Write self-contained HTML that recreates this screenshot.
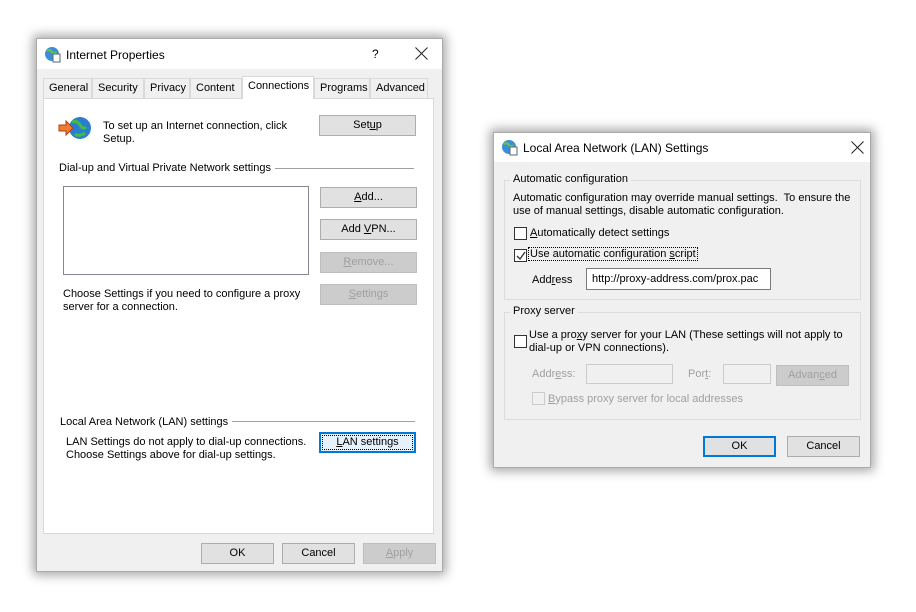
<!DOCTYPE html>
<html><head><style>
*{margin:0;padding:0;box-sizing:border-box}
body{width:916px;height:612px;background:#fff;position:relative;overflow:hidden;font-family:"Liberation Sans",sans-serif;font-size:11px;color:#000;white-space:nowrap}
.a{position:absolute}
.win{position:absolute;background:#f0f0f0;border:1px solid #aaa;box-shadow:0 0 10px 3px rgba(0,0,0,.35)}
.title{position:absolute;left:0;top:0;right:0;height:30px;background:#fff;font-size:12px}
.btn{position:absolute;background:#e1e1e1;border:1px solid #adadad;text-align:center;line-height:19px;height:21px}
.dis{color:#a0a0a0;background:#ccc;border-color:#bfbfbf}
.tab{position:absolute;top:78px;height:20px;border:1px solid #d9d9d9;border-bottom:none;background:#f0f0f0;line-height:19px;padding-left:5px}
.line{position:absolute;height:1px;background:#a0a0a0}
.cb{position:absolute;width:13px;height:13px;border:1px solid #333;background:#fff}
.grp{position:absolute;border:1px solid #dcdcdc}
.u{text-decoration:underline}
.x{position:absolute;width:13px;height:13px}
.x:before,.x:after{content:"";position:absolute;left:6px;top:-2px;width:1px;height:17px;background:#222;transform:rotate(45deg)}
.x:after{transform:rotate(-45deg)}
</style></head><body>

<!-- Internet Properties -->
<div class="win" style="left:36px;top:38px;width:407px;height:534px">
 <div class="title">
  <svg class="a" style="left:7px;top:7px" width="17" height="17"><circle cx="8" cy="8" r="7" fill="#3c8fd6"/><path d="M3 5q3-2 5 1t4 0" stroke="#6c3" stroke-width="2" fill="none"/><rect x="9" y="8" width="7" height="8" fill="#fff" stroke="#567"/></svg>
  <div class="a" style="left:29px;top:9px">Internet Properties</div>
  <div class="a" style="left:335px;top:8px;font-size:12px">?</div>
  <div class="x" style="left:378px;top:8px"></div>
 </div>
</div>
<div class="a" style="left:43px;top:98px;width:391px;height:436px;background:#fff;border:1px solid #d9d9d9"></div>
<div class="tab" style="left:43px;width:49px">General</div>
<div class="tab" style="left:92px;width:52px">Security</div>
<div class="tab" style="left:144px;width:46px">Privacy</div>
<div class="tab" style="left:190px;width:52px">Content</div>
<div class="tab" style="left:242px;top:76px;width:72px;height:23px;background:#fff">Connections</div>
<div class="tab" style="left:314px;width:56px">Programs</div>
<div class="tab" style="left:370px;width:58px">Advanced</div>

<svg class="a" style="left:58px;top:116px" width="36" height="26"><circle cx="22" cy="12" r="11" fill="#2a7ed0"/><path d="M14 6q5-2 8 3t6 2M17 18q4 3 10-1" stroke="#4b4" stroke-width="3" fill="none"/><path d="M1 9h7v-4l7 7-7 7v-4H1z" fill="#f07a30" stroke="#b04010"/></svg>
<div class="a" style="left:103px;top:120px;line-height:13px">To set up an Internet connection, click<br>Setup.</div>
<div class="btn" style="left:319px;top:115px;width:97px">Set<span class="u">u</span>p</div>

<div class="a" style="left:59px;top:162px">Dial-up and Virtual Private Network settings</div>
<div class="line" style="left:275px;top:168px;width:139px"></div>
<div class="a" style="left:63px;top:186px;width:246px;height:89px;border:1px solid #828790;background:#fff"></div>
<div class="btn" style="left:320px;top:187px;width:97px"><span class="u">A</span>dd...</div>
<div class="btn" style="left:320px;top:219px;width:97px">Add <span class="u">V</span>PN...</div>
<div class="btn dis" style="left:320px;top:252px;width:97px"><span class="u">R</span>emove...</div>
<div class="btn dis" style="left:320px;top:284px;width:97px"><span class="u">S</span>ettings</div>
<div class="a" style="left:63px;top:288px;line-height:13px">Choose Settings if you need to configure a proxy<br>server for a connection.</div>

<div class="a" style="left:60px;top:416px">Local Area Network (LAN) settings</div>
<div class="line" style="left:232px;top:421px;width:183px"></div>
<div class="a" style="left:66px;top:436px;line-height:13px">LAN Settings do not apply to dial-up connections.<br>Choose Settings above for dial-up settings.</div>
<div class="btn" style="left:319px;top:432px;width:97px;border:2px solid #0078d7;line-height:17px;background:#e5f1fb"><div class="a" style="left:1px;top:1px;right:1px;bottom:1px;border:1px dotted #000"></div><span class="u">L</span>AN settings</div>

<div class="btn" style="left:201px;top:543px;width:73px">OK</div>
<div class="btn" style="left:282px;top:543px;width:73px">Cancel</div>
<div class="btn dis" style="left:363px;top:543px;width:73px"><span class="u">A</span>pply</div>

<!-- LAN Settings -->
<div class="win" style="left:493px;top:132px;width:378px;height:336px">
 <div class="title" style="height:29px">
  <svg class="a" style="left:7px;top:6px" width="17" height="17"><circle cx="8" cy="8" r="7" fill="#3c8fd6"/><path d="M3 5q3-2 5 1t4 0" stroke="#6c3" stroke-width="2" fill="none"/><rect x="9" y="8" width="7" height="8" fill="#fff" stroke="#567"/></svg>
  <div class="a" style="left:29px;top:8px">Local Area Network (LAN) Settings</div>
  <div class="x" style="left:357px;top:8px"></div>
 </div>
</div>
<div class="grp" style="left:504px;top:180px;width:357px;height:120px"></div>
<div class="a" style="left:510px;top:173px;background:#f0f0f0;padding:0 3px">Automatic configuration</div>
<div class="a" style="left:513px;top:192px;line-height:13px">Automatic configuration may override manual settings.&nbsp; To ensure the<br>use of manual settings, disable automatic configuration.</div>
<div class="cb" style="left:514px;top:227px"></div>
<div class="a" style="left:530px;top:227px"><span class="u">A</span>utomatically detect settings</div>
<div class="cb" style="left:514px;top:249px"><svg class="a" style="left:1px;top:1px" width="10" height="10"><path d="M1 5l3 3 5-7" stroke="#333" fill="none" stroke-width="1.3"/></svg></div>
<div class="a" style="left:529px;top:248px;outline:1px dotted #000;padding:0 1px">Use automatic configuration <span class="u">s</span>cript</div>
<div class="a" style="left:532px;top:274px">Add<span class="u">r</span>ess</div>
<div class="a" style="left:586px;top:268px;width:185px;height:22px;border:1px solid #7a7a7a;background:#fff;padding:4px 0 0 5px">http://proxy-address.com/prox.pac</div>

<div class="grp" style="left:504px;top:312px;width:357px;height:108px"></div>
<div class="a" style="left:510px;top:305px;background:#f0f0f0;padding:0 3px">Proxy server</div>
<div class="cb" style="left:514px;top:335px"></div>
<div class="a" style="left:529px;top:329px;line-height:13px">Use a pro<span class="u">x</span>y server for your LAN (These settings will not apply to<br>dial-up or VPN connections).</div>
<div class="a" style="left:532px;top:368px;color:#a0a0a0">Addr<span class="u">e</span>ss:</div>
<div class="a" style="left:586px;top:364px;width:87px;height:20px;border:1px solid #ccc"></div>
<div class="a" style="left:688px;top:368px;color:#a0a0a0">Por<span class="u">t</span>:</div>
<div class="a" style="left:723px;top:364px;width:48px;height:20px;border:1px solid #ccc"></div>
<div class="btn dis" style="left:776px;top:365px;width:73px">Advan<span class="u">c</span>ed</div>
<div class="cb" style="left:532px;top:392px;border-color:#ccc;background:#f0f0f0"></div>
<div class="a" style="left:548px;top:393px;color:#a0a0a0"><span class="u">B</span>ypass proxy server for local addresses</div>

<div class="btn" style="left:703px;top:436px;width:73px;border:2px solid #0078d7;line-height:17px">OK</div>
<div class="btn" style="left:787px;top:436px;width:73px">Cancel</div>
</body></html>
